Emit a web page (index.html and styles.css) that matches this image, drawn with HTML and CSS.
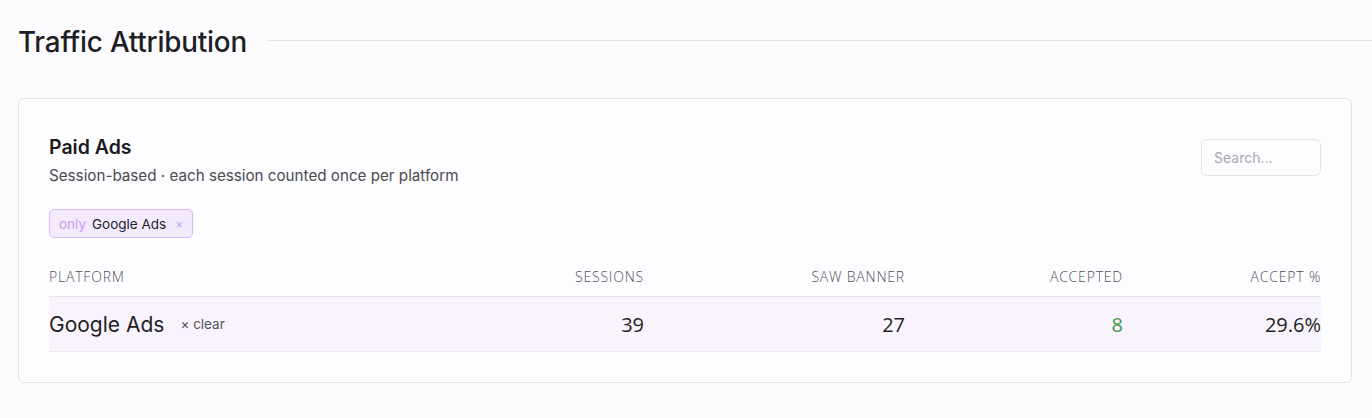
FILE: index.html
```html
<!DOCTYPE html>
<html>
<head>
<meta charset="utf-8">
<link rel="stylesheet" href="styles.css">
</head>
<body>
<div class="page">
  <div class="section-head">
    <h1 class="section-title">Traffic Attribution</h1>
    <div class="section-rule"></div>
  </div>
  <div class="card">
    <div class="card-top">
      <div class="card-info">
        <h2 class="card-title">Paid Ads</h2>
        <p class="card-sub">Session-based · each session counted once per platform</p>
        <div class="chip"><span class="chip-only">only</span><span class="chip-name">Google Ads</span><span class="chip-x">×</span></div>
      </div>
      <input class="search" type="text" placeholder="Search...">
    </div>
    <div class="table">
      <div class="thead">
        <div class="th left">Platform</div>
        <div class="th">Sessions</div>
        <div class="th">Saw Banner</div>
        <div class="th">Accepted</div>
        <div class="th">Accept %</div>
      </div>
      <div class="trow">
        <div class="td left"><span class="plat">Google Ads</span><span class="clear">× clear</span></div>
        <div class="td">39</div>
        <div class="td">27</div>
        <div class="td green">8</div>
        <div class="td">29.6%</div>
      </div>
    </div>
  </div>
</div>
</body>
</html>
```
FILE: styles.css
```css
* { box-sizing: border-box; }
html, body { margin: 0; padding: 0; background: #fcfbfd; }
body { font-family: Inter, "Noto Sans", sans-serif; color: #1f1f24; }
.page { padding: 22px 0 0 18px; }
.section-head { display: flex; align-items: center; gap: 20px; height: 40px; }
.section-title { margin: 0; font-size: 27.8px; font-weight: 500; letter-spacing: -0.2px; color: #1e1e24; white-space: nowrap; }
.section-rule { flex: 1; height: 1px; background: #e4e2e6; margin-top: -3px; }
.card {
  margin-top: 36px; margin-right: 20px;
  border: 1px solid #e3e2e5; border-radius: 6px;
  background: #fdfcfe;
  padding: 36px 30px 30px 30px;
}
.card-top { display: flex; justify-content: space-between; align-items: flex-start; }
.card-title { margin: 0; font-size: 19.5px; font-weight: 600; color: #1a1a20; line-height: 24px; }
.card-sub { margin: 7px 0 0 0; font-size: 15.2px; color: #4a4a52; line-height: 20px; }
.chip {
  display: inline-flex; align-items: center; height: 29px; margin-top: 23px;
  padding: 0 9px; border: 1px solid #d9b8fb; background: #f4eafe; border-radius: 5px;
  font-size: 13.5px;
}
.chip-only { color: #c49af0; margin-right: 6px; }
.chip-name { color: #222228; }
.chip-x { color: #c4a4ec; margin-left: 9px; font-size: 12px; }
.search {
  width: 120px; height: 37px; margin-top: 4px;
  border: 1px solid #e6e4e8; border-radius: 6px; background: #fdfcfe;
  padding: 0 12px; font-family: Inter, sans-serif; font-size: 14px; outline: none;
}
.search::placeholder { color: #a8a6b0; }
.table { margin-top: 29px; }
.thead, .trow { display: grid; grid-template-columns: 435px 160px 261px 218px 198px; }
.thead { border-bottom: 1px solid #e4e2e7; height: 30px; align-items: start; }
.th {
  text-align: right; font-family: "Open Sans", sans-serif; font-weight: 300;
  font-size: 14px; letter-spacing: 0.8px; text-transform: uppercase; color: #505058; line-height: 20px;
}
.th.left, .td.left { text-align: left; }
.trow { background: #f8f3fd; height: 55px; align-items: center; border-bottom: 1px solid #ebe8ee; }
.td { text-align: right; font-family: "Open Sans", sans-serif; font-size: 20px; color: #1f1f24; }
.td.green { color: #3c9a3c; }
.td.left { display: flex; align-items: center; font-family: Inter, sans-serif; }
.plat { font-size: 21px; color: #1e1e24; }
.clear { font-size: 13.5px; color: #55555e; margin-left: 16px; }
```
